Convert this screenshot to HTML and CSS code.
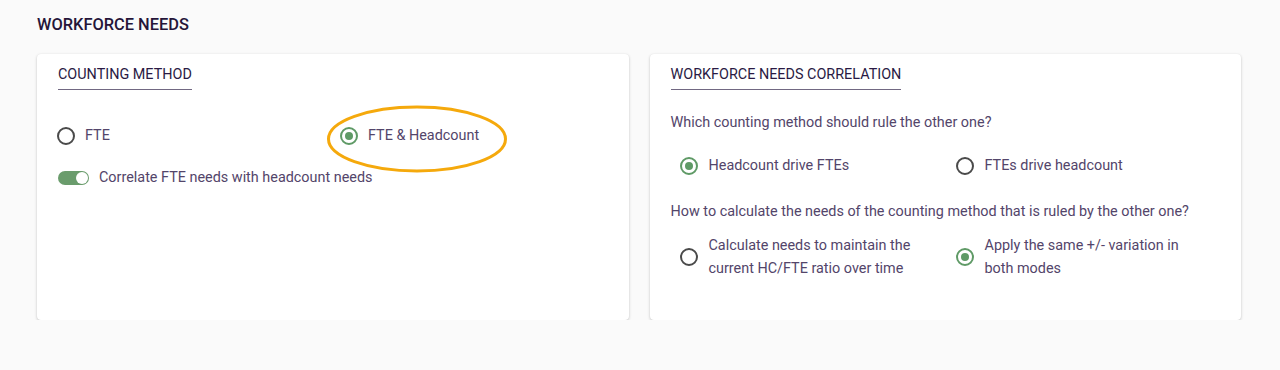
FILE: index.html
```html
<!DOCTYPE html>
<html lang="en">
<head>
<meta charset="utf-8">
<title>Workforce needs</title>
<link rel="stylesheet" href="styles.css">
</head>
<body>
<div class="page">
  <h1 class="heading">WORKFORCE NEEDS</h1>
  <div class="cards">
    <section class="card">
      <h2 class="card-title">COUNTING METHOD</h2>
      <div class="method-row">
        <label class="option">
          <span class="radio"></span>
          <span class="label">FTE</span>
        </label>
        <label class="option highlighted">
          <span class="radio checked"></span>
          <span class="label">FTE &amp; Headcount</span>
          <svg class="ring" width="182" height="70" viewBox="0 0 182 70" aria-hidden="true">
            <ellipse cx="91" cy="35" rx="88.5" ry="32" fill="none" stroke="#f5a90c" stroke-width="3"/>
          </svg>
        </label>
      </div>
      <label class="toggle-row">
        <span class="toggle"><span class="knob"></span></span>
        <span class="label">Correlate FTE needs with headcount needs</span>
      </label>
    </section>
    <section class="card">
      <h2 class="card-title">WORKFORCE NEEDS CORRELATION</h2>
      <p class="question q1">Which counting method should rule the other one?</p>
      <div class="choice-row">
        <label class="option">
          <span class="radio checked"></span>
          <span class="label">Headcount drive FTEs</span>
        </label>
        <label class="option">
          <span class="radio"></span>
          <span class="label">FTEs drive headcount</span>
        </label>
      </div>
      <p class="question q2">How to calculate the needs of the counting method that is ruled by the other one?</p>
      <div class="choice-row multi">
        <label class="option">
          <span class="radio"></span>
          <span class="label">Calculate needs to maintain the<br>current HC/FTE ratio over time</span>
        </label>
        <label class="option">
          <span class="radio checked"></span>
          <span class="label">Apply the same +/- variation in<br>both modes</span>
        </label>
      </div>
    </section>
  </div>
</div>
</body>
</html>
```
FILE: styles.css
```css
* { box-sizing: border-box; }
html, body { margin: 0; padding: 0; }
body {
  background: #fafafa;
  font-family: Roboto, "Liberation Sans", Arial, sans-serif;
  color: #53456a;
  font-size: 14.4px;
}
.page {
  padding: 14px 39px 0 37px;
}
.heading {
  margin: 0 0 18px 0;
  font-size: 16.4px;
  line-height: 22px;
  font-weight: 500;
  color: #251539;
}
.cards {
  display: grid;
  grid-template-columns: 1fr 1fr;
  gap: 21px;
}
.card {
  background: #fff;
  border-radius: 4px;
  box-shadow: 0 1px 3px rgba(0,0,0,0.22), 0 0 1px rgba(0,0,0,0.06);
  height: 266px;
  padding: 10px 21px 0 21px;
}
.card-title {
  display: inline-block;
  margin: 0;
  font-size: 14.4px;
  line-height: 21px;
  font-weight: 400;
  color: #2a1a44;
  padding-bottom: 4px;
  border-bottom: 1px solid #716882;
}
.option {
  display: flex;
  align-items: center;
  position: relative;
  line-height: 24px;
}
.radio {
  flex: none;
  width: 18px;
  height: 18px;
  border: 2px solid #4a4a4a;
  border-radius: 50%;
  position: relative;
}
.radio.checked {
  border-color: #5f9a66;
}
.radio.checked::after {
  content: "";
  position: absolute;
  left: 3px;
  top: 3px;
  width: 8px;
  height: 8px;
  border-radius: 50%;
  background: #5f9a66;
}
.option .label {
  margin-left: 10px;
}
.method-row {
  margin-top: 34px;
  display: grid;
  grid-template-columns: 283px 1fr;
  margin-left: -1px;
}
.ring {
  position: absolute;
  left: -14px;
  top: -20px;
  pointer-events: none;
}
.toggle-row {
  display: flex;
  align-items: center;
  margin-top: 18px;
  line-height: 24px;
}
.toggle {
  flex: none;
  width: 31px;
  height: 14px;
  border-radius: 7px;
  background: #6a9c6c;
  position: relative;
}
.knob {
  position: absolute;
  right: 1px;
  top: 1px;
  width: 12px;
  height: 12px;
  border-radius: 50%;
  background: #fff;
}
.toggle-row .label {
  margin-left: 10px;
}
.question {
  margin: 0;
  line-height: 22px;
}
.q1 { margin-top: 22px; }
.choice-row {
  display: grid;
  grid-template-columns: 276px 1fr;
  margin-left: 9px;
  margin-top: 20px;
}
.choice-row .label { margin-left: 11px; }
.q2 { margin-top: 23px; }
.choice-row.multi {
  margin-top: 11px;
}
.choice-row.multi .label {
  line-height: 23px;
}
```
